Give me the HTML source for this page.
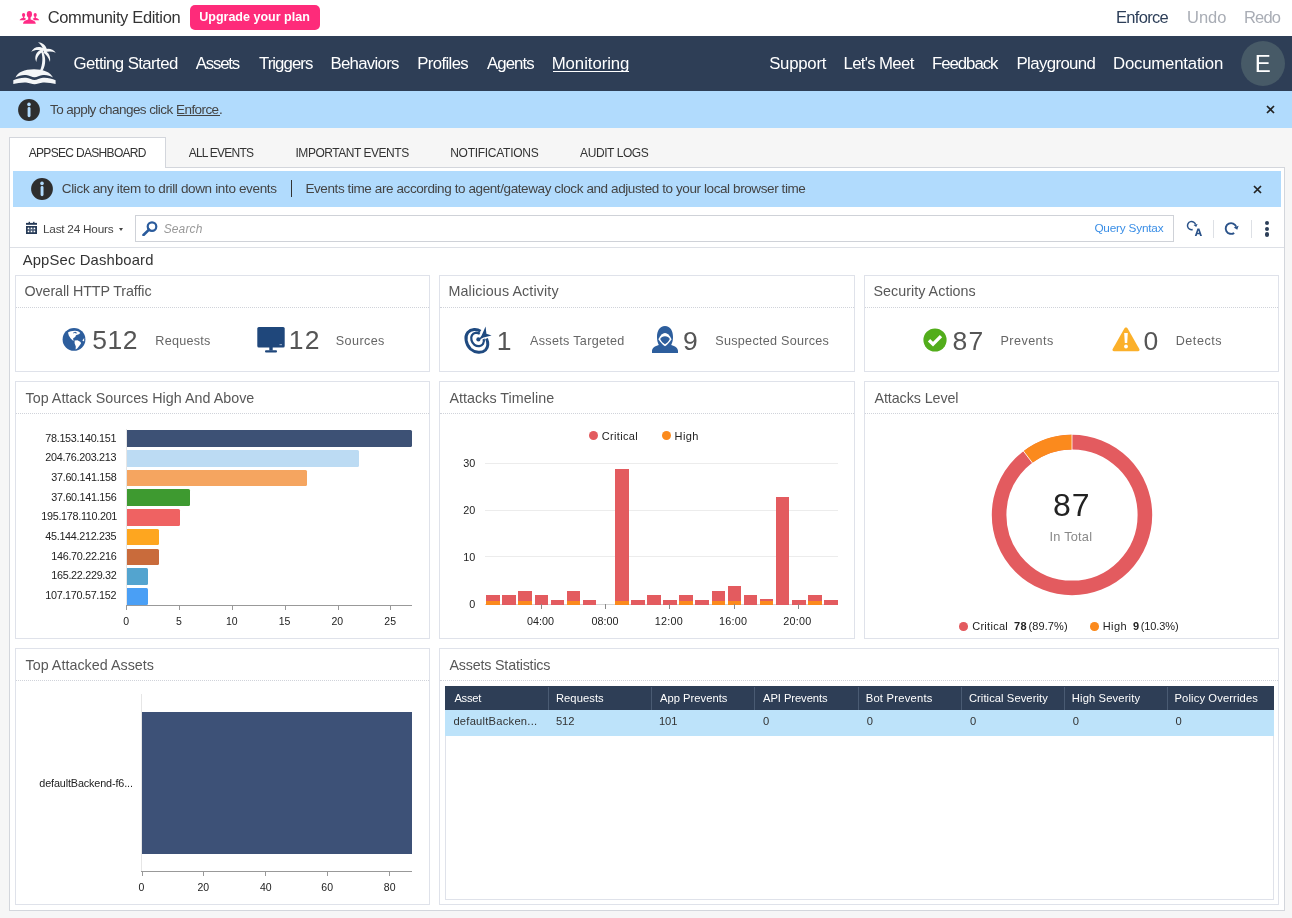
<!DOCTYPE html>
<html><head><meta charset="utf-8"><title>AppSec Dashboard</title>
<style>
html,body{margin:0;padding:0;width:1292px;height:918px;overflow:hidden;background:#fff;font-family:"Liberation Sans", sans-serif;}
.t{position:absolute;white-space:pre;font-family:"Liberation Sans", sans-serif;}
svg{display:block}
</style></head><body>
<svg style="position:absolute;left:16px;top:6px" width="26" height="22" viewBox="0 0 26 22">
<g fill="#ff2a85">
<ellipse cx="13.4" cy="8.3" rx="2.6" ry="3.3"/><rect x="12.2" y="10.5" width="2.4" height="3.5"/>
<path d="M7 17.8 C7 15.6 9.3 14.3 12 13.5 L14.8 13.5 C17.5 14.3 19.8 15.6 19.8 17.8 Z"/>
<ellipse cx="7.6" cy="9" rx="1.6" ry="2.1"/><rect x="6.9" y="10.5" width="1.4" height="2"/>
<path d="M3.6 14.3 C3.8 13.2 5 12.4 6.8 12 L8.3 12 C9.1 12.2 9.7 12.5 10.1 12.9 C9.3 13.3 8.8 13.8 8.5 14.3 Z"/>
<ellipse cx="19.2" cy="9" rx="1.6" ry="2.1"/><rect x="18.5" y="10.5" width="1.4" height="2"/>
<path d="M23.2 14.3 C23 13.2 21.8 12.4 20 12 L18.5 12 C17.7 12.2 17.1 12.5 16.7 12.9 C17.5 13.3 18 13.8 18.3 14.3 Z"/>
</g></svg>
<div style="position:absolute;left:190px;top:5px;width:130px;height:25px;background:#fe2b7a;border-radius:5px"></div>
<div style="position:absolute;left:0px;top:36px;width:1292px;height:55px;background:#2e3e56;"></div>
<svg style="position:absolute;left:10px;top:40px" width="50" height="50" viewBox="0 0 50 50">
<g fill="#f4f6f8">
<path d="M32.8 11 C35.8 17 36.3 24 32.6 30.8 L30 30.8 C32.8 24 33 17 31.2 11.5 Z"/>
<path d="M34.2 11.2 C32.5 7 30.5 4 28 2.2 C32 2.2 35.8 5 37 9.6 Z"/>
<path d="M33.5 11.5 C29.5 9.5 25 9.5 21.2 12 C23.5 7 29 5.2 34.5 8.8 Z"/>
<path d="M33 12 C28.8 13.5 26.8 17.5 26.4 22 C24 17.5 25.5 11.5 32.2 9.2 Z"/>
<path d="M33.8 9.6 C38.5 7.6 43 8.8 45.8 12.8 C42 11.2 38.2 11.4 34.2 12.4 Z"/>
<path d="M34.4 10.4 C39 12.4 40.8 16.5 40 22 C38.4 17.5 36.4 14.8 33.2 12.6 Z"/>
<path d="M5.5 37.6 C7.5 32.2 14.5 29.3 24 29.3 C33.5 29.3 40.5 32.2 43 37.6 C40 35.6 36.5 34.6 33 35 C29.5 35.4 27 37.2 24.5 37.2 C22 37.2 19.5 35.4 16 35 C12.5 34.6 8.5 35.6 5.5 37.6 Z"/>
<path d="M3.3 40.2 C7 38.7 12 37.4 16 37.8 C19.5 38.2 22 40 24.5 40 C27 40 29.5 38.2 33 37.8 C37 37.4 42 38.7 45.6 40.2 L45.6 44 C42 43.2 37 42.2 33 42.5 C29.5 42.8 27 44.2 24.5 44.2 C22 44.2 19.5 42.8 16 42.5 C12 42.2 7 43.2 3.3 44 Z"/>
</g></svg>
<div style="position:absolute;left:553px;top:71px;width:76px;height:1.3px;background:#fff;"></div>
<div style="position:absolute;left:1241px;top:41px;width:44px;height:45px;border-radius:50%;background:#475a67"></div>
<div style="position:absolute;left:0px;top:91px;width:1292px;height:37px;background:#b1dbfd;"></div>
<svg style="position:absolute;left:17.8px;top:99px" width="22" height="22" viewBox="0 0 22 22">
<circle cx="11" cy="11" r="10.9" fill="#2e2e2e"/><circle cx="11" cy="5.4" r="1.8" fill="#b1dbfd"/>
<rect x="9.6" y="8.1" width="2.9" height="10.2" rx="1.45" fill="#b1dbfd"/></svg>
<div style="position:absolute;left:177px;top:115px;width:42.5px;height:1px;background:#444;"></div>
<svg style="position:absolute;left:1266.0px;top:105.3px" width="9" height="9" viewBox="0 0 9 9">
<path d="M1 1 L8 8 M8 1 L1 8" stroke="#222" stroke-width="1.7" stroke-linecap="butt"/></svg>
<div style="position:absolute;left:0px;top:128px;width:1292px;height:790px;background:#f6f6f6;"></div>
<div style="position:absolute;left:9px;top:137px;width:155px;height:31px;background:#fff;border:1px solid #d3d6dc;border-bottom:none"></div>
<div style="position:absolute;left:9px;top:167px;width:1276px;height:744px;background:#fff;box-sizing:border-box;border:1px solid #d3d6dc;border-top:none"></div>
<div style="position:absolute;left:165px;top:167px;width:1120px;height:1px;background:#d3d6dc;"></div>
<div style="position:absolute;left:13px;top:171px;width:1268px;height:36px;background:#b1dbfd;"></div>
<svg style="position:absolute;left:30.9px;top:178.1px" width="22" height="22" viewBox="0 0 22 22">
<circle cx="11" cy="11" r="10.9" fill="#2e2e2e"/><circle cx="11" cy="5.4" r="1.8" fill="#b1dbfd"/>
<rect x="9.6" y="8.1" width="2.9" height="10.2" rx="1.45" fill="#b1dbfd"/></svg>
<div style="position:absolute;left:291px;top:180px;width:1.3px;height:16.5px;background:#333;"></div>
<svg style="position:absolute;left:1253.0px;top:184.6px" width="9" height="9" viewBox="0 0 9 9">
<path d="M1 1 L8 8 M8 1 L1 8" stroke="#222" stroke-width="1.7" stroke-linecap="butt"/></svg>
<svg style="position:absolute;left:22px;top:218px" width="20" height="20" viewBox="0 0 20 20">
<g fill="#263a56"><rect x="4" y="4.9" width="11" height="1.9"/><rect x="6.6" y="3.8" width="1.4" height="1.5"/><rect x="11.1" y="3.8" width="1.4" height="1.5"/>
<rect x="4" y="8" width="11" height="8"/></g>
<g fill="#fff"><circle cx="6.5" cy="10.4" r="0.9"/><circle cx="9.5" cy="10.4" r="0.9"/><circle cx="12.4" cy="10.4" r="0.9"/>
<circle cx="6.5" cy="13.4" r="0.9"/><circle cx="9.5" cy="13.4" r="0.9"/><circle cx="12.4" cy="13.4" r="0.9"/></g>
<g fill="#7f8ea3"><rect x="5.5" y="11.6" width="8" height="0.6"/><rect x="7.8" y="9.5" width="0.5" height="5"/><rect x="10.7" y="9.5" width="0.5" height="5"/></g>
</svg>
<div style="position:absolute;left:119px;top:227.5px;width:0;height:0;border-left:2.5px solid transparent;border-right:2.5px solid transparent;border-top:3px solid #444"></div>
<div style="position:absolute;left:135px;top:215px;width:1039px;height:27px;background:#fff;box-sizing:border-box;border:1px solid #cfd2d8"></div>
<svg style="position:absolute;left:142px;top:221px" width="16" height="15" viewBox="0 0 16 15">
<circle cx="10" cy="5.6" r="4.3" fill="none" stroke="#2a5b9c" stroke-width="2.2"/><path d="M7 8.6 L1.5 14" stroke="#2a5b9c" stroke-width="2.6" stroke-linecap="round"/></svg>
<svg style="position:absolute;left:1182px;top:216px" width="24" height="24" viewBox="0 0 24 24">
<path d="M13.56 8.54 A4.1 4.1 0 1 0 10.66 13.56" fill="none" stroke="#2a5289" stroke-width="1.5"/><path d="M15.59 8.00 L11.53 9.08 L14.23 11.05 Z" fill="#2a5289"/>
<path d="M12.8 20 L15.4 12.5 L17.4 12.5 L20 20 L18.1 20 L17.5 18.2 L15.2 18.2 L14.6 20 Z M15.6 16.8 L17.1 16.8 L16.4 14.4 Z" fill="#2a5289"/></svg>
<div style="position:absolute;left:1213px;top:219.5px;width:1px;height:18px;background:#dde0e5;"></div>
<svg style="position:absolute;left:1222px;top:220px" width="20" height="18" viewBox="0 0 20 18">
<path d="M14.17 6.65 A5.4 5.4 0 1 0 12.20 12.92" fill="none" stroke="#2a5289" stroke-width="1.9"/><path d="M16.62 5.76 L11.73 7.54 L15.27 9.66 Z" fill="#2a5289"/></svg>
<div style="position:absolute;left:1251px;top:219.5px;width:1px;height:18px;background:#dde0e5;"></div>
<div style="position:absolute;left:1265.3px;top:220.8px;width:4.2px;height:4.2px;border-radius:50%;background:#2c3e58"></div>
<div style="position:absolute;left:1265.3px;top:226.6px;width:4.2px;height:4.2px;border-radius:50%;background:#2c3e58"></div>
<div style="position:absolute;left:1265.3px;top:232.4px;width:4.2px;height:4.2px;border-radius:50%;background:#2c3e58"></div>
<div style="position:absolute;left:10px;top:247px;width:1274px;height:1px;background:#dde0e6;"></div>
<div style="position:absolute;left:15px;top:275px;width:415px;height:97px;box-sizing:border-box;border:1px solid #dfe2ea;background:#fff"></div>
<div style="position:absolute;left:16px;top:307px;width:413px;height:0;border-top:1px dotted #d0d3da"></div>
<div style="position:absolute;left:439px;top:275px;width:416px;height:97px;box-sizing:border-box;border:1px solid #dfe2ea;background:#fff"></div>
<div style="position:absolute;left:440px;top:307px;width:414px;height:0;border-top:1px dotted #d0d3da"></div>
<div style="position:absolute;left:864px;top:275px;width:415px;height:97px;box-sizing:border-box;border:1px solid #dfe2ea;background:#fff"></div>
<div style="position:absolute;left:865px;top:307px;width:413px;height:0;border-top:1px dotted #d0d3da"></div>
<div style="position:absolute;left:15px;top:381px;width:415px;height:258px;box-sizing:border-box;border:1px solid #dfe2ea;background:#fff"></div>
<div style="position:absolute;left:16px;top:413px;width:413px;height:0;border-top:1px dotted #d0d3da"></div>
<div style="position:absolute;left:439px;top:381px;width:416px;height:258px;box-sizing:border-box;border:1px solid #dfe2ea;background:#fff"></div>
<div style="position:absolute;left:440px;top:413px;width:414px;height:0;border-top:1px dotted #d0d3da"></div>
<div style="position:absolute;left:864px;top:381px;width:415px;height:258px;box-sizing:border-box;border:1px solid #dfe2ea;background:#fff"></div>
<div style="position:absolute;left:865px;top:413px;width:413px;height:0;border-top:1px dotted #d0d3da"></div>
<div style="position:absolute;left:15px;top:648px;width:415px;height:257px;box-sizing:border-box;border:1px solid #dfe2ea;background:#fff"></div>
<div style="position:absolute;left:16px;top:680px;width:413px;height:0;border-top:1px dotted #d0d3da"></div>
<div style="position:absolute;left:439px;top:648px;width:840px;height:257px;box-sizing:border-box;border:1px solid #dfe2ea;background:#fff"></div>
<div style="position:absolute;left:440px;top:680px;width:838px;height:0;border-top:1px dotted #d0d3da"></div>
<svg style="position:absolute;left:60px;top:325px" width="28" height="28" viewBox="0 0 28 28">
<circle cx="14" cy="14.4" r="11.4" fill="#2d5e9d"/>
<path fill="#fff" d="M8 7.6 C9.5 6.5 12 5.8 15 5.8 C17 5.8 19 6.7 20.3 8 L18.8 9.2 L16 10.3 L15.2 12 L13.6 13 L12.8 14.2 L14.3 15.2 L12.8 15.4 L10.5 13.3 L8.8 10.5 Z"/>
<path fill="#2d5e9d" d="M13.2 7.4 L15.3 6.7 L17.2 7.9 L16.1 8.4 L14.4 7.8 L13.8 8.7 Z"/>
<path fill="#fff" d="M14.6 15.6 L17.5 15.3 L20.6 17 L21 18.6 L19.2 21 L17.2 23.4 L15.6 24.6 L15.8 21.5 L14.6 18.2 Z"/>
<path fill="#fff" d="M22.3 15.6 L24.2 13 L24.1 16.6 Z"/></svg>
<svg style="position:absolute;left:256.5px;top:326.5px" width="28" height="26" viewBox="0 0 28 26">
<rect x="0.3" y="0" width="27.4" height="20.5" rx="1.5" fill="#1f477b"/><rect x="12.3" y="20" width="3.4" height="3.5" fill="#1f477b"/>
<rect x="8" y="23.2" width="12" height="2.2" rx="1" fill="#1f477b"/><rect x="22.5" y="17" width="2.5" height="1.2" fill="#8aa0c0"/></svg>
<svg style="position:absolute;left:462px;top:324px" width="32" height="32" viewBox="0 0 32 32">
<g fill="none" stroke="#1f4a80">
<path d="M18.5 7.2 C15 4.8 9 4.8 5.8 8.5 C2.5 12.5 3.8 20.5 8.5 25 C13 29 20 29.5 23.5 26 C26.3 23 26 18 24.5 14.5" stroke-width="3"/>
<path d="M17.8 9.8 C15 8 11.5 8.6 10 11.2 C8.3 14 9.5 18.5 12.5 20.8 C15.5 23 19.5 22.5 21 20 C22.2 18 22 16 21.6 15" stroke-width="2.3"/>
</g>
<circle cx="16.4" cy="15.4" r="2.1" fill="#1f4a80"/>
<path d="M23.6 2.6 L24.4 9.8 L29.6 11.4 L21.6 13.4 L16.3 16.2 L19.6 11.4 Z" fill="#1f4a80"/></svg>
<svg style="position:absolute;left:649px;top:323px" width="32" height="32" viewBox="0 0 32 32">
<path fill="#2d5e9d" d="M16 3 C10.5 3 8 8 8 14 C8 17 8.5 19.5 9.8 22 C6 23 3 25 3 28 L3 30 L29 30 L29 28 C29 25 26 23 22.2 22 C23.5 19.5 24 17 24 14 C24 8 21.5 3 16 3 Z"/>
<path fill="#fff" d="M16 10 C18.5 10 20.5 12 22.6 16.2 C20.5 19.5 18.5 21.5 16 23.2 C13.5 21.5 11.5 19.5 9.4 16.2 C11.5 12 13.5 10 16 10 Z"/>
<path fill="#2d5e9d" d="M16 13.2 C18.3 13.2 19.8 14.3 20.8 15.9 C19.6 18.3 17.9 20.1 16 21.2 C14.1 20.1 12.4 18.3 11.2 15.9 C12.2 14.3 13.7 13.2 16 13.2 Z"/></svg>
<svg style="position:absolute;left:923px;top:327.5px" width="24" height="24" viewBox="0 0 24 24">
<circle cx="12" cy="12" r="11.6" fill="#52ad1b"/><path d="M6 12.3 L10 16.2 L18 8.2" fill="none" stroke="#fff" stroke-width="3.3"/></svg>
<svg style="position:absolute;left:1111.5px;top:327px" width="28" height="25" viewBox="0 0 28 25">
<path d="M14 0.5 C14.8 0.5 15.3 1 15.8 1.8 L27.3 22 C27.9 23.2 27.3 24.3 26 24.3 L2 24.3 C0.7 24.3 0.1 23.2 0.7 22 L12.2 1.8 C12.7 1 13.2 0.5 14 0.5 Z" fill="#fbb02a"/>
<path d="M12.2 6 L15.8 6 L15.2 16 L12.8 16 Z" fill="#fff"/><circle cx="14" cy="19.5" r="1.9" fill="#fff"/></svg>
<div style="position:absolute;left:126.2px;top:430.3px;width:285.88px;height:16.7px;background:#3d5175;border-radius:0 1.5px 1.5px 0"></div>
<div style="position:absolute;left:126.2px;top:450.0px;width:233.11px;height:16.7px;background:#bcdbf3;border-radius:0 1.5px 1.5px 0"></div>
<div style="position:absolute;left:126.2px;top:469.7px;width:180.34px;height:16.7px;background:#f5a560;border-radius:0 1.5px 1.5px 0"></div>
<div style="position:absolute;left:126.2px;top:489.4px;width:64.23px;height:16.7px;background:#3e9a30;border-radius:0 1.5px 1.5px 0"></div>
<div style="position:absolute;left:126.2px;top:509.1px;width:53.67px;height:16.7px;background:#ef6262;border-radius:0 1.5px 1.5px 0"></div>
<div style="position:absolute;left:126.2px;top:528.8px;width:32.56px;height:16.7px;background:#fea61f;border-radius:0 1.5px 1.5px 0"></div>
<div style="position:absolute;left:126.2px;top:548.5px;width:32.56px;height:16.7px;background:#c96b3b;border-radius:0 1.5px 1.5px 0"></div>
<div style="position:absolute;left:126.2px;top:568.2px;width:22.01px;height:16.7px;background:#53a4cf;border-radius:0 1.5px 1.5px 0"></div>
<div style="position:absolute;left:126.2px;top:587.9px;width:22.01px;height:16.7px;background:#4a9ff5;border-radius:0 1.5px 1.5px 0"></div>
<div style="position:absolute;left:125.5px;top:428.6px;width:1px;height:177px;background:#e6e6e6;"></div>
<div style="position:absolute;left:126px;top:605px;width:286px;height:1px;background:#999;"></div>
<div style="position:absolute;left:126px;top:605px;width:1px;height:4.5px;background:#999;"></div>
<div style="position:absolute;left:179px;top:605px;width:1px;height:4.5px;background:#999;"></div>
<div style="position:absolute;left:232px;top:605px;width:1px;height:4.5px;background:#999;"></div>
<div style="position:absolute;left:285px;top:605px;width:1px;height:4.5px;background:#999;"></div>
<div style="position:absolute;left:338px;top:605px;width:1px;height:4.5px;background:#999;"></div>
<div style="position:absolute;left:390px;top:605px;width:1px;height:4.5px;background:#999;"></div>
<div style="position:absolute;left:485px;top:462.8px;width:353px;height:1px;background:#ececec;"></div>
<div style="position:absolute;left:485px;top:509.6px;width:353px;height:1px;background:#ececec;"></div>
<div style="position:absolute;left:485px;top:556.4px;width:353px;height:1px;background:#ececec;"></div>
<div style="position:absolute;left:485px;top:604px;width:353px;height:1px;background:#d5d5d5;"></div>
<div style="position:absolute;left:486.3px;top:595.44px;width:13.5px;height:9.36px;background:#e35b5f;"></div>
<div style="position:absolute;left:486.3px;top:600.6px;width:13.5px;height:4.2px;background:#fb8a1d;"></div>
<div style="position:absolute;left:502.39px;top:595.44px;width:13.5px;height:9.36px;background:#e35b5f;"></div>
<div style="position:absolute;left:518.48px;top:590.76px;width:13.5px;height:14.04px;background:#e35b5f;"></div>
<div style="position:absolute;left:518.48px;top:600.6px;width:13.5px;height:4.2px;background:#fb8a1d;"></div>
<div style="position:absolute;left:534.57px;top:595.44px;width:13.5px;height:9.36px;background:#e35b5f;"></div>
<div style="position:absolute;left:550.66px;top:600.12px;width:13.5px;height:4.68px;background:#e35b5f;"></div>
<div style="position:absolute;left:566.75px;top:590.76px;width:13.5px;height:14.04px;background:#e35b5f;"></div>
<div style="position:absolute;left:566.75px;top:600.6px;width:13.5px;height:4.2px;background:#fb8a1d;"></div>
<div style="position:absolute;left:582.84px;top:600.12px;width:13.5px;height:4.68px;background:#e35b5f;"></div>
<div style="position:absolute;left:615.02px;top:469.08px;width:13.5px;height:135.72px;background:#e35b5f;"></div>
<div style="position:absolute;left:615.02px;top:600.6px;width:13.5px;height:4.2px;background:#fb8a1d;"></div>
<div style="position:absolute;left:631.11px;top:600.12px;width:13.5px;height:4.68px;background:#e35b5f;"></div>
<div style="position:absolute;left:647.2px;top:595.44px;width:13.5px;height:9.36px;background:#e35b5f;"></div>
<div style="position:absolute;left:663.29px;top:600.12px;width:13.5px;height:4.68px;background:#e35b5f;"></div>
<div style="position:absolute;left:679.38px;top:595.44px;width:13.5px;height:9.36px;background:#e35b5f;"></div>
<div style="position:absolute;left:679.38px;top:600.6px;width:13.5px;height:4.2px;background:#fb8a1d;"></div>
<div style="position:absolute;left:695.47px;top:600.12px;width:13.5px;height:4.68px;background:#e35b5f;"></div>
<div style="position:absolute;left:711.56px;top:590.76px;width:13.5px;height:14.04px;background:#e35b5f;"></div>
<div style="position:absolute;left:711.56px;top:600.6px;width:13.5px;height:4.2px;background:#fb8a1d;"></div>
<div style="position:absolute;left:727.65px;top:586.08px;width:13.5px;height:18.72px;background:#e35b5f;"></div>
<div style="position:absolute;left:727.65px;top:600.6px;width:13.5px;height:4.2px;background:#fb8a1d;"></div>
<div style="position:absolute;left:743.74px;top:595.44px;width:13.5px;height:9.36px;background:#e35b5f;"></div>
<div style="position:absolute;left:759.83px;top:599.42px;width:13.5px;height:5.38px;background:#e35b5f;"></div>
<div style="position:absolute;left:759.83px;top:600.6px;width:13.5px;height:4.2px;background:#fb8a1d;"></div>
<div style="position:absolute;left:775.92px;top:497.16px;width:13.5px;height:107.64px;background:#e35b5f;"></div>
<div style="position:absolute;left:792.01px;top:600.12px;width:13.5px;height:4.68px;background:#e35b5f;"></div>
<div style="position:absolute;left:808.1px;top:595.44px;width:13.5px;height:9.36px;background:#e35b5f;"></div>
<div style="position:absolute;left:808.1px;top:600.6px;width:13.5px;height:4.2px;background:#fb8a1d;"></div>
<div style="position:absolute;left:824.19px;top:600.12px;width:13.5px;height:4.68px;background:#e35b5f;"></div>
<div style="position:absolute;left:541px;top:604px;width:1px;height:5px;background:#888;"></div>
<div style="position:absolute;left:605px;top:604px;width:1px;height:5px;background:#888;"></div>
<div style="position:absolute;left:669px;top:604px;width:1px;height:5px;background:#888;"></div>
<div style="position:absolute;left:734px;top:604px;width:1px;height:5px;background:#888;"></div>
<div style="position:absolute;left:798px;top:604px;width:1px;height:5px;background:#888;"></div>
<div style="position:absolute;left:588.9px;top:431.3px;width:9px;height:9px;border-radius:50%;background:#e35b5f"></div>
<div style="position:absolute;left:661.7px;top:431.3px;width:9px;height:9px;border-radius:50%;background:#fb8a1d"></div>
<svg style="position:absolute;left:986.5px;top:430px" width="170" height="170" viewBox="0 0 170 170">
<circle cx="85" cy="85" r="72.9" fill="none" stroke="#e35b5f" stroke-width="14.600000000000009"/>
<circle cx="85" cy="85" r="72.9" fill="none" stroke="#fb8a1d" stroke-width="14.600000000000009" stroke-dasharray="47.38 458.04" transform="rotate(-127.24 85 85)"/>
<path d="M85 3.799999999999997 L85 20.400000000000006" stroke="#fff" stroke-width="0.8"/>
<path d="M85 3.799999999999997 L85 20.400000000000006" stroke="#fff" stroke-width="0.8" transform="rotate(-37.24 85 85)"/>
</svg>
<div style="position:absolute;left:959.1px;top:622.2px;width:8.6px;height:8.6px;border-radius:50%;background:#e35b5f"></div>
<div style="position:absolute;left:1090px;top:622.2px;width:8.6px;height:8.6px;border-radius:50%;background:#fb8a1d"></div>
<div style="position:absolute;left:141px;top:694.3px;width:1px;height:177px;background:#e6e6e6;"></div>
<div style="position:absolute;left:142px;top:712.1px;width:270px;height:141.6px;background:#3d5177;"></div>
<div style="position:absolute;left:141px;top:871px;width:271px;height:1px;background:#999;"></div>
<div style="position:absolute;left:142px;top:871px;width:1px;height:4.5px;background:#999;"></div>
<div style="position:absolute;left:203px;top:871px;width:1px;height:4.5px;background:#999;"></div>
<div style="position:absolute;left:265px;top:871px;width:1px;height:4.5px;background:#999;"></div>
<div style="position:absolute;left:327px;top:871px;width:1px;height:4.5px;background:#999;"></div>
<div style="position:absolute;left:389px;top:871px;width:1px;height:4.5px;background:#999;"></div>
<div style="position:absolute;left:445px;top:686px;width:829px;height:214px;box-sizing:border-box;border:1px solid #dfe2ea"></div>
<div style="position:absolute;left:445px;top:686px;width:829px;height:23.7px;background:#2e3e56;"></div>
<div style="position:absolute;left:445px;top:709.7px;width:829px;height:26px;background:#bde3fa;"></div>
<div style="position:absolute;left:548.0px;top:686.5px;width:1px;height:23.2px;background:#4a5b73;"></div>
<div style="position:absolute;left:651.0px;top:686.5px;width:1px;height:23.2px;background:#4a5b73;"></div>
<div style="position:absolute;left:754.1px;top:686.5px;width:1px;height:23.2px;background:#4a5b73;"></div>
<div style="position:absolute;left:857.8px;top:686.5px;width:1px;height:23.2px;background:#4a5b73;"></div>
<div style="position:absolute;left:961.0px;top:686.5px;width:1px;height:23.2px;background:#4a5b73;"></div>
<div style="position:absolute;left:1063.9px;top:686.5px;width:1px;height:23.2px;background:#4a5b73;"></div>
<div style="position:absolute;left:1166.6px;top:686.5px;width:1px;height:23.2px;background:#4a5b73;"></div>
<div style="position:absolute;left:0;top:0;width:1292px;height:918px;will-change:transform">
<div class="t" style="top:8.73px;font-size:16.5px;line-height:16.5px;letter-spacing:-0.344px;left:47.70px;color:#333;">Community Edition</div>
<div class="t" style="top:10.72px;font-size:12.5px;line-height:12.5px;font-weight:bold;letter-spacing:0.013px;left:199.20px;color:#fff;">Upgrade your plan</div>
<div class="t" style="top:9.03px;font-size:16.5px;line-height:16.5px;letter-spacing:-0.700px;left:1116.00px;color:#2c3e58;">Enforce</div>
<div class="t" style="top:9.03px;font-size:16.5px;line-height:16.5px;left:1187.00px;color:#a9adb5;">Undo</div>
<div class="t" style="top:9.03px;font-size:16.5px;line-height:16.5px;letter-spacing:-0.800px;left:1243.90px;color:#a9adb5;">Redo</div>
<div class="t" style="top:55.98px;font-size:16.8px;line-height:16.8px;letter-spacing:-0.586px;left:73.60px;color:#fff;">Getting Started</div>
<div class="t" style="top:55.98px;font-size:16.8px;line-height:16.8px;letter-spacing:-1.200px;left:195.80px;color:#fff;">Assets</div>
<div class="t" style="top:55.98px;font-size:16.8px;line-height:16.8px;letter-spacing:-0.943px;left:259.00px;color:#fff;">Triggers</div>
<div class="t" style="top:55.98px;font-size:16.8px;line-height:16.8px;letter-spacing:-0.700px;left:330.40px;color:#fff;">Behaviors</div>
<div class="t" style="top:55.98px;font-size:16.8px;line-height:16.8px;letter-spacing:-0.629px;left:417.20px;color:#fff;">Profiles</div>
<div class="t" style="top:55.98px;font-size:16.8px;line-height:16.8px;letter-spacing:-0.880px;left:486.90px;color:#fff;">Agents</div>
<div class="t" style="top:55.98px;font-size:16.8px;line-height:16.8px;letter-spacing:-0.067px;left:551.70px;color:#fff;">Monitoring</div>
<div class="t" style="top:55.98px;font-size:16.8px;line-height:16.8px;letter-spacing:-0.267px;left:769.20px;color:#fff;">Support</div>
<div class="t" style="top:55.98px;font-size:16.8px;line-height:16.8px;letter-spacing:-0.678px;left:843.50px;color:#fff;">Let's Meet</div>
<div class="t" style="top:55.98px;font-size:16.8px;line-height:16.8px;letter-spacing:-1.057px;left:932.10px;color:#fff;">Feedback</div>
<div class="t" style="top:55.98px;font-size:16.8px;line-height:16.8px;letter-spacing:-0.611px;left:1016.50px;color:#fff;">Playground</div>
<div class="t" style="top:55.98px;font-size:16.8px;line-height:16.8px;letter-spacing:-0.225px;left:1113.10px;color:#fff;">Documentation</div>
<div class="t" style="top:52.48px;font-size:24px;line-height:24px;left:1254.70px;color:#fff;">E</div>
<div class="t" style="top:103.07px;font-size:13.5px;line-height:13.5px;letter-spacing:-0.567px;left:50.00px;color:#444;">To apply changes click</div>
<div class="t" style="top:103.07px;font-size:13.5px;line-height:13.5px;letter-spacing:-0.567px;left:176.00px;color:#444;">Enforce</div>
<div class="t" style="top:103.07px;font-size:13.5px;line-height:13.5px;left:219.00px;color:#444;">.</div>
<div class="t" style="top:146.94px;font-size:12px;line-height:12px;letter-spacing:-0.680px;left:28.70px;color:#333;">APPSEC DASHBOARD</div>
<div class="t" style="top:146.94px;font-size:12px;line-height:12px;letter-spacing:-0.778px;left:188.70px;color:#333;">ALL EVENTS</div>
<div class="t" style="top:146.94px;font-size:12px;line-height:12px;letter-spacing:-0.467px;left:295.50px;color:#333;">IMPORTANT EVENTS</div>
<div class="t" style="top:146.94px;font-size:12px;line-height:12px;letter-spacing:-0.275px;left:450.20px;color:#333;">NOTIFICATIONS</div>
<div class="t" style="top:146.94px;font-size:12px;line-height:12px;letter-spacing:-0.422px;left:580.10px;color:#333;">AUDIT LOGS</div>
<div class="t" style="top:181.97px;font-size:13.5px;line-height:13.5px;letter-spacing:-0.351px;left:61.80px;color:#444;">Click any item to drill down into events</div>
<div class="t" style="top:181.97px;font-size:13.5px;line-height:13.5px;letter-spacing:-0.406px;left:305.40px;color:#444;">Events time are according to agent/gateway clock and adjusted to your local browser time</div>
<div class="t" style="top:223.61px;font-size:11.8px;line-height:11.8px;letter-spacing:-0.242px;left:43.00px;color:#444;">Last 24 Hours</div>
<div class="t" style="top:223.44px;font-size:12px;line-height:12px;font-style:italic;letter-spacing:0.120px;left:163.70px;color:#999;">Search</div>
<div class="t" style="top:222.81px;font-size:11.8px;line-height:11.8px;letter-spacing:-0.209px;left:1094.40px;color:#3a8ee6;">Query Syntax</div>
<div class="t" style="top:252.87px;font-size:14.8px;line-height:14.8px;letter-spacing:0.160px;left:22.70px;color:#333;">AppSec Dashboard</div>
<div class="t" style="top:284.20px;font-size:14.3px;line-height:14.3px;letter-spacing:-0.100px;left:24.50px;color:#585858;">Overall HTTP Traffic</div>
<div class="t" style="top:284.20px;font-size:14.3px;line-height:14.3px;letter-spacing:0.118px;left:448.50px;color:#585858;">Malicious Activity</div>
<div class="t" style="top:284.20px;font-size:14.3px;line-height:14.3px;letter-spacing:0.033px;left:873.50px;color:#585858;">Security Actions</div>
<div class="t" style="top:390.60px;font-size:14.3px;line-height:14.3px;letter-spacing:0.022px;left:25.50px;color:#585858;">Top Attack Sources High And Above</div>
<div class="t" style="top:390.60px;font-size:14.3px;line-height:14.3px;letter-spacing:0.033px;left:449.50px;color:#585858;">Attacks Timeline</div>
<div class="t" style="top:390.60px;font-size:14.3px;line-height:14.3px;letter-spacing:-0.083px;left:874.50px;color:#585858;">Attacks Level</div>
<div class="t" style="top:657.80px;font-size:14.3px;line-height:14.3px;letter-spacing:0.028px;left:25.50px;color:#585858;">Top Attacked Assets</div>
<div class="t" style="top:657.80px;font-size:14.3px;line-height:14.3px;letter-spacing:-0.194px;left:449.50px;color:#585858;">Assets Statistics</div>
<div class="t" style="top:327.17px;font-size:26.5px;line-height:26.5px;letter-spacing:0.600px;left:92.20px;color:#555;">512</div>
<div class="t" style="top:334.63px;font-size:12.6px;line-height:12.6px;letter-spacing:0.271px;left:155.30px;color:#666;">Requests</div>
<div class="t" style="top:327.17px;font-size:26.5px;line-height:26.5px;letter-spacing:1.200px;left:288.80px;color:#555;">12</div>
<div class="t" style="top:334.63px;font-size:12.6px;line-height:12.6px;letter-spacing:0.400px;left:335.80px;color:#666;">Sources</div>
<div class="t" style="top:327.57px;font-size:26.5px;line-height:26.5px;left:496.80px;color:#555;">1</div>
<div class="t" style="top:334.63px;font-size:12.6px;line-height:12.6px;letter-spacing:0.307px;left:530.00px;color:#666;">Assets Targeted</div>
<div class="t" style="top:327.57px;font-size:26.5px;line-height:26.5px;left:683.00px;color:#555;">9</div>
<div class="t" style="top:334.63px;font-size:12.6px;line-height:12.6px;letter-spacing:0.275px;left:715.30px;color:#666;">Suspected Sources</div>
<div class="t" style="top:327.57px;font-size:26.5px;line-height:26.5px;letter-spacing:1.300px;left:952.50px;color:#555;">87</div>
<div class="t" style="top:334.63px;font-size:12.6px;line-height:12.6px;letter-spacing:0.443px;left:1000.50px;color:#666;">Prevents</div>
<div class="t" style="top:327.57px;font-size:26.5px;line-height:26.5px;left:1143.60px;color:#555;">0</div>
<div class="t" style="top:334.63px;font-size:12.6px;line-height:12.6px;letter-spacing:0.533px;left:1175.70px;color:#666;">Detects</div>
<div class="t" style="top:432.56px;font-size:10.8px;line-height:10.8px;letter-spacing:-0.300px;left:45.30px;color:#222;">78.153.140.151</div>
<div class="t" style="top:452.26px;font-size:10.8px;line-height:10.8px;letter-spacing:-0.300px;left:45.30px;color:#222;">204.76.203.213</div>
<div class="t" style="top:471.96px;font-size:10.8px;line-height:10.8px;letter-spacing:-0.300px;left:51.30px;color:#222;">37.60.141.158</div>
<div class="t" style="top:491.66px;font-size:10.8px;line-height:10.8px;letter-spacing:-0.300px;left:51.30px;color:#222;">37.60.141.156</div>
<div class="t" style="top:511.36px;font-size:10.8px;line-height:10.8px;letter-spacing:-0.300px;left:41.30px;color:#222;">195.178.110.201</div>
<div class="t" style="top:531.06px;font-size:10.8px;line-height:10.8px;letter-spacing:-0.300px;left:45.30px;color:#222;">45.144.212.235</div>
<div class="t" style="top:550.76px;font-size:10.8px;line-height:10.8px;letter-spacing:-0.300px;left:51.30px;color:#222;">146.70.22.216</div>
<div class="t" style="top:570.46px;font-size:10.8px;line-height:10.8px;letter-spacing:-0.300px;left:51.30px;color:#222;">165.22.229.32</div>
<div class="t" style="top:590.16px;font-size:10.8px;line-height:10.8px;letter-spacing:-0.300px;left:45.30px;color:#222;">107.170.57.152</div>
<div class="t" style="top:615.61px;font-size:10.5px;line-height:10.5px;left:123.30px;color:#222;">0</div>
<div class="t" style="top:615.61px;font-size:10.5px;line-height:10.5px;left:176.10px;color:#222;">5</div>
<div class="t" style="top:615.61px;font-size:10.5px;line-height:10.5px;left:225.90px;color:#222;">10</div>
<div class="t" style="top:615.61px;font-size:10.5px;line-height:10.5px;left:278.70px;color:#222;">15</div>
<div class="t" style="top:615.61px;font-size:10.5px;line-height:10.5px;left:331.50px;color:#222;">20</div>
<div class="t" style="top:615.61px;font-size:10.5px;line-height:10.5px;left:384.30px;color:#222;">25</div>
<div class="t" style="top:458.16px;font-size:10.8px;line-height:10.8px;left:463.30px;color:#222;">30</div>
<div class="t" style="top:504.96px;font-size:10.8px;line-height:10.8px;left:463.30px;color:#222;">20</div>
<div class="t" style="top:551.76px;font-size:10.8px;line-height:10.8px;left:463.30px;color:#222;">10</div>
<div class="t" style="top:598.56px;font-size:10.8px;line-height:10.8px;left:469.30px;color:#222;">0</div>
<div class="t" style="top:615.86px;font-size:10.8px;line-height:10.8px;left:527.10px;color:#222;">04:00</div>
<div class="t" style="top:615.86px;font-size:10.8px;line-height:10.8px;left:591.40px;color:#222;">08:00</div>
<div class="t" style="top:615.86px;font-size:10.8px;line-height:10.8px;letter-spacing:0.250px;left:654.70px;color:#222;">12:00</div>
<div class="t" style="top:615.86px;font-size:10.8px;line-height:10.8px;letter-spacing:0.250px;left:719.00px;color:#222;">16:00</div>
<div class="t" style="top:615.86px;font-size:10.8px;line-height:10.8px;letter-spacing:0.250px;left:783.30px;color:#222;">20:00</div>
<div class="t" style="top:430.79px;font-size:11px;line-height:11px;letter-spacing:0.314px;left:601.80px;color:#222;">Critical</div>
<div class="t" style="top:430.79px;font-size:11px;line-height:11px;letter-spacing:0.367px;left:674.60px;color:#222;">High</div>
<div class="t" style="top:489.11px;font-size:32px;line-height:32px;letter-spacing:0.900px;left:1053.10px;color:#222;">87</div>
<div class="t" style="top:530.76px;font-size:12.8px;line-height:12.8px;letter-spacing:0.200px;left:1049.60px;color:#888;">In Total</div>
<div class="t" style="top:620.69px;font-size:11px;line-height:11px;letter-spacing:0.286px;left:972.20px;color:#222;">Critical</div>
<div class="t" style="top:620.69px;font-size:11px;line-height:11px;font-weight:bold;letter-spacing:0.300px;left:1014.10px;color:#222;">78</div>
<div class="t" style="top:620.69px;font-size:11px;line-height:11px;letter-spacing:0.100px;left:1028.50px;color:#222;">(89.7%)</div>
<div class="t" style="top:620.69px;font-size:11px;line-height:11px;letter-spacing:0.367px;left:1102.80px;color:#222;">High</div>
<div class="t" style="top:620.69px;font-size:11px;line-height:11px;font-weight:bold;left:1133.00px;color:#222;">9</div>
<div class="t" style="top:620.69px;font-size:11px;line-height:11px;letter-spacing:-0.100px;left:1140.70px;color:#222;">(10.3%)</div>
<div class="t" style="top:881.91px;font-size:10.5px;line-height:10.5px;left:138.50px;color:#222;">0</div>
<div class="t" style="top:881.91px;font-size:10.5px;line-height:10.5px;left:197.45px;color:#222;">20</div>
<div class="t" style="top:881.91px;font-size:10.5px;line-height:10.5px;left:259.90px;color:#222;">40</div>
<div class="t" style="top:881.91px;font-size:10.5px;line-height:10.5px;left:321.35px;color:#222;">60</div>
<div class="t" style="top:881.91px;font-size:10.5px;line-height:10.5px;left:383.80px;color:#222;">80</div>
<div class="t" style="top:777.96px;font-size:10.8px;line-height:10.8px;letter-spacing:-0.126px;left:39.30px;color:#222;">defaultBackend-f6...</div>
<div class="t" style="top:692.52px;font-size:11.2px;line-height:11.2px;letter-spacing:-0.250px;left:454.40px;color:#fff;">Asset</div>
<div class="t" style="top:715.62px;font-size:11.2px;line-height:11.2px;letter-spacing:0.233px;left:453.40px;color:#333;">defaultBacken...</div>
<div class="t" style="top:692.52px;font-size:11.2px;line-height:11.2px;letter-spacing:0.071px;left:555.90px;color:#fff;">Requests</div>
<div class="t" style="top:715.62px;font-size:11.2px;line-height:11.2px;left:555.90px;color:#333;">512</div>
<div class="t" style="top:692.52px;font-size:11.2px;line-height:11.2px;letter-spacing:0.036px;left:659.90px;color:#fff;">App Prevents</div>
<div class="t" style="top:715.62px;font-size:11.2px;line-height:11.2px;left:658.90px;color:#333;">101</div>
<div class="t" style="top:692.52px;font-size:11.2px;line-height:11.2px;letter-spacing:-0.064px;left:763.00px;color:#fff;">API Prevents</div>
<div class="t" style="top:715.62px;font-size:11.2px;line-height:11.2px;left:763.00px;color:#333;">0</div>
<div class="t" style="top:692.52px;font-size:11.2px;line-height:11.2px;letter-spacing:0.236px;left:865.70px;color:#fff;">Bot Prevents</div>
<div class="t" style="top:715.62px;font-size:11.2px;line-height:11.2px;left:866.70px;color:#333;">0</div>
<div class="t" style="top:692.52px;font-size:11.2px;line-height:11.2px;letter-spacing:0.075px;left:968.90px;color:#fff;">Critical Severity</div>
<div class="t" style="top:715.62px;font-size:11.2px;line-height:11.2px;left:969.90px;color:#333;">0</div>
<div class="t" style="top:692.52px;font-size:11.2px;line-height:11.2px;letter-spacing:0.142px;left:1071.80px;color:#fff;">High Severity</div>
<div class="t" style="top:715.62px;font-size:11.2px;line-height:11.2px;left:1072.80px;color:#333;">0</div>
<div class="t" style="top:692.52px;font-size:11.2px;line-height:11.2px;letter-spacing:0.127px;left:1174.50px;color:#fff;">Policy Overrides</div>
<div class="t" style="top:715.62px;font-size:11.2px;line-height:11.2px;left:1175.50px;color:#333;">0</div>
</div>
</body></html>
